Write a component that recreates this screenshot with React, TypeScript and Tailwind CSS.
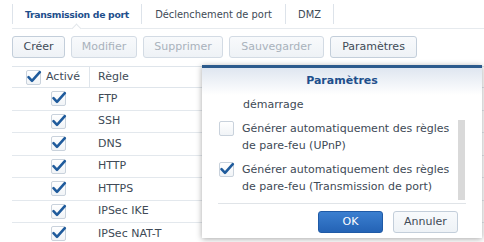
import React from "react";

const font = { fontFamily: '"DejaVu Sans", Verdana, sans-serif' };

function Check({ className = "" }: { className?: string }) {
    return (
        <svg viewBox="0 0 16 16" className={className}>
            <path d="M2.5 8.2 L6 11.8 L13.8 3.2" fill="none" stroke="#1f5b9c" strokeWidth="2.6"
                  strokeLinecap="round" strokeLinejoin="round"/>
        </svg>
    );
}

function Box({ checked }: { checked: boolean }) {
    return (
        <div className="relative w-[15px] h-[15px] border border-[#c9d2dc] rounded-[2px] bg-gradient-to-b from-white to-[#f1f4f7]">
            {checked && <Check className="absolute -left-[1px] -top-[2px] w-[16px] h-[16px]"/>}
        </div>
    );
}

function ToolButton({ label, width, disabled }: { label: string; width: string; disabled?: boolean }) {
    return (
        <button
            className={`${width} h-[22px] border rounded-[3px] bg-gradient-to-b from-[#f8fafc] to-[#eef2f6] text-[11px] ${disabled ? "border-[#d3dbe4] text-[#a9b2bc]" : "border-[#c3ceda] text-[#404a56]"}`}>
            {label}
        </button>
    );
}

const rules = ["FTP", "SSH", "DNS", "HTTP", "HTTPS", "IPSec IKE", "IPSec NAT-T"];

export default function App() {
    return (
        <div className="relative w-[484px] h-[242px] overflow-hidden bg-white text-[#404a56]" style={font}>
            {/* tabs */}
            <div className="relative h-[29px] ml-[12px] flex items-center border-b border-[#e6eaee]">
                <div className="h-[20px] w-[129px] pt-[2px] border-l border-[#dde3ea] flex items-center justify-center text-[9.3px] tracking-[-0.3px] font-bold text-[#1e4f8c]">
                    Transmission de port
                </div>
                <div className="h-[20px] w-[144px] pt-[2px] border-l border-[#dde3ea] flex items-center justify-center text-[9.9px]">
                    Déclenchement de port
                </div>
                <div className="h-[20px] w-[49px] pt-[2px] border-x border-[#dde3ea] flex items-center justify-center text-[9.9px]">
                    DMZ
                </div>
                <div className="absolute left-[61px] -bottom-[4px] w-[7px] h-[7px] rotate-45 bg-white border-l border-t border-[#e3e7eb]"/>
            </div>

            {/* toolbar */}
            <div className="flex gap-[6px] pl-[12px] pt-[7px]">
                <ToolButton label="Créer" width="w-[53px]"/>
                <ToolButton label="Modifier" width="w-[66px]" disabled/>
                <ToolButton label="Supprimer" width="w-[80px]" disabled/>
                <ToolButton label="Sauvegarder" width="w-[95px]" disabled/>
                <ToolButton label="Paramètres" width="w-[87px]"/>
            </div>

            {/* table */}
            <div className="ml-[12px] mt-[8px] text-[11px]">
                <div className="h-[22px] flex items-center border-y border-[#dfe5eb]">
                    <div className="w-[78px] h-full flex items-center gap-[5px] pl-[14px] border-r border-[#dfe5eb]">
                        <Box checked/>
                        <span>Activé</span>
                    </div>
                    <div className="pl-[8px]">Règle</div>
                </div>
                {rules.map((r) => (
                    <div key={r} className="h-[22.5px] flex items-center border-b border-[#e3e8ed]">
                        <div className="w-[78px] flex justify-center pl-[15px]">
                            <Box checked/>
                        </div>
                        <div className="pl-[8px]">{r}</div>
                    </div>
                ))}
            </div>

            {/* dialog */}
            <div className="absolute left-[202px] top-[65px] w-[280px] h-[173px] bg-white border-t-[3px] border-[#2c5a8c] shadow-[0_1px_6px_rgba(0,0,0,0.35)] flex flex-col">
                <div className="h-[27px] shrink-0 bg-gradient-to-b from-[#dfe6f0] to-white flex items-center justify-center text-[11px] font-bold text-[#1e4f8c]">
                    Paramètres
                </div>
                <div className="relative h-[108px] overflow-hidden pl-[17px] pr-[24px] text-[11px] leading-[17px]">
                    <div className="pl-[24px] pt-[1px]">démarrage</div>
                    <div className="flex gap-[8px] mt-[7px]">
                        <div className="pt-[1px]"><Box checked={false}/></div>
                        <div>Générer automatiquement des règles<br/>de pare-feu (UPnP)</div>
                    </div>
                    <div className="flex gap-[8px] mt-[7px]">
                        <div className="pt-[1px]"><Box checked/></div>
                        <div>Générer automatiquement des règles<br/>de pare-feu (Transmission de port)</div>
                    </div>
                    <div className="absolute right-[17px] top-[25px] w-[7px] h-[80px] bg-[#d9d9d9]"/>
                </div>
                <div className="mx-[16px] border-t border-[#e0e4e8]"/>
                <div className="flex justify-end gap-[10px] pr-[24px] pt-[7px]">
                    <button className="w-[65px] h-[22px] rounded-[3px] border border-[#1f5aa6] bg-gradient-to-b from-[#3b7fd0] to-[#2463b5] text-white text-[11px]">
                        OK
                    </button>
                    <button className="w-[65px] h-[22px] rounded-[3px] border border-[#c3ceda] bg-gradient-to-b from-[#f8fafc] to-[#eef2f6] text-[11px]">
                        Annuler
                    </button>
                </div>
            </div>
        </div>
    );
}
